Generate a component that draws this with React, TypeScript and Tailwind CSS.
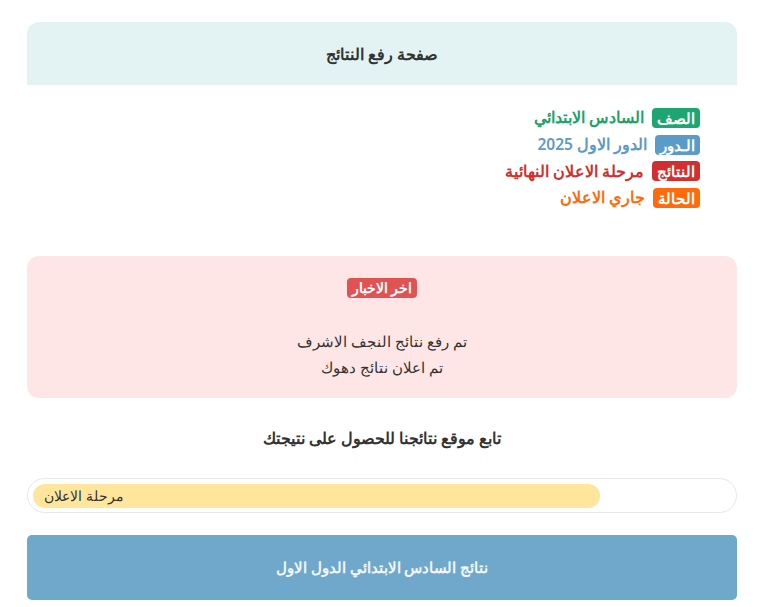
const ROWS = [
  { label: 'الصف', value: 'السادس الابتدائي', badge: 'bg-[#1ea672]', text: 'text-[#22a06b]' },
  { label: 'الـدور', value: 'الدور الاول 2025', badge: 'bg-[#5b9bc7]', text: 'text-[#5b9bc7]' },
  { label: 'النتائج', value: 'مرحلة الاعلان النهائية', badge: 'bg-[#d0302f]', text: 'text-[#d0302f]' },
  { label: 'الحالة', value: 'جاري الاعلان', badge: 'bg-[#ff6b0a]', text: 'text-[#ff6b0a]' },
]

export default function App() {
  return (
    <div dir="rtl" className="min-h-screen bg-white font-['Noto_Sans',sans-serif] text-[#333]">
      <div className="mr-[31px] w-[710px] pt-[22px]">
        <div className="flex h-[63px] items-center justify-center rounded-t-[12px] bg-[#e3f3f3]">
          <h1 className="m-0 text-[16px] font-semibold text-[#333]">صفحة رفع النتائج</h1>
        </div>

        <div className="flex flex-col gap-[6.6px] pr-[37px] pt-[23px]">
          {ROWS.map(r => (
            <div key={r.label} className="flex h-[20px] items-center gap-[8px]">
              <span className={`rounded-[4px] px-[5px] text-[15px] font-semibold leading-[20px] text-white ${r.badge}`}>{r.label}</span>
              <span className={`text-[15.5px] font-semibold ${r.text}`}>{r.value}</span>
            </div>
          ))}
        </div>

        <div className="mt-[48px] flex h-[142px] flex-col items-center rounded-[12px] bg-[#ffe6e6] pt-[22px]">
          <span className="rounded-[4px] bg-[#e15252] px-[5px] text-[14px] font-semibold leading-[20px] text-white">اخر الاخبار</span>
          <p className="m-0 mt-[30px] text-[15px] leading-[26px] text-[#333]">تم رفع نتائج النجف الاشرف</p>
          <p className="m-0 text-[15px] leading-[26px] text-[#333]">تم اعلان نتائج دهوك</p>
        </div>

        <h2 className="m-0 mt-[28px] text-center text-[15.5px] font-semibold leading-[24px] text-[#333]">تابع موقع نتائجنا للحصول على نتيجتك</h2>

        <div dir="ltr" className="mt-[28px] h-[35px] rounded-full border border-[#e8e8e8] p-[5px]">
          <div className="flex h-[24px] w-[81.3%] items-center rounded-full bg-[#ffe69c] pl-[11px]">
            <span dir="rtl" className="text-[14px] text-[#333]">مرحلة الاعلان</span>
          </div>
        </div>

        <button className="mt-[22px] flex h-[65px] w-full items-center justify-center rounded-[5px] bg-[#6fa8cb] text-[15px] font-semibold text-[#f2f6f9]">
          نتائج السادس الابتدائي الدول الاول
        </button>
      </div>
    </div>
  )
}
